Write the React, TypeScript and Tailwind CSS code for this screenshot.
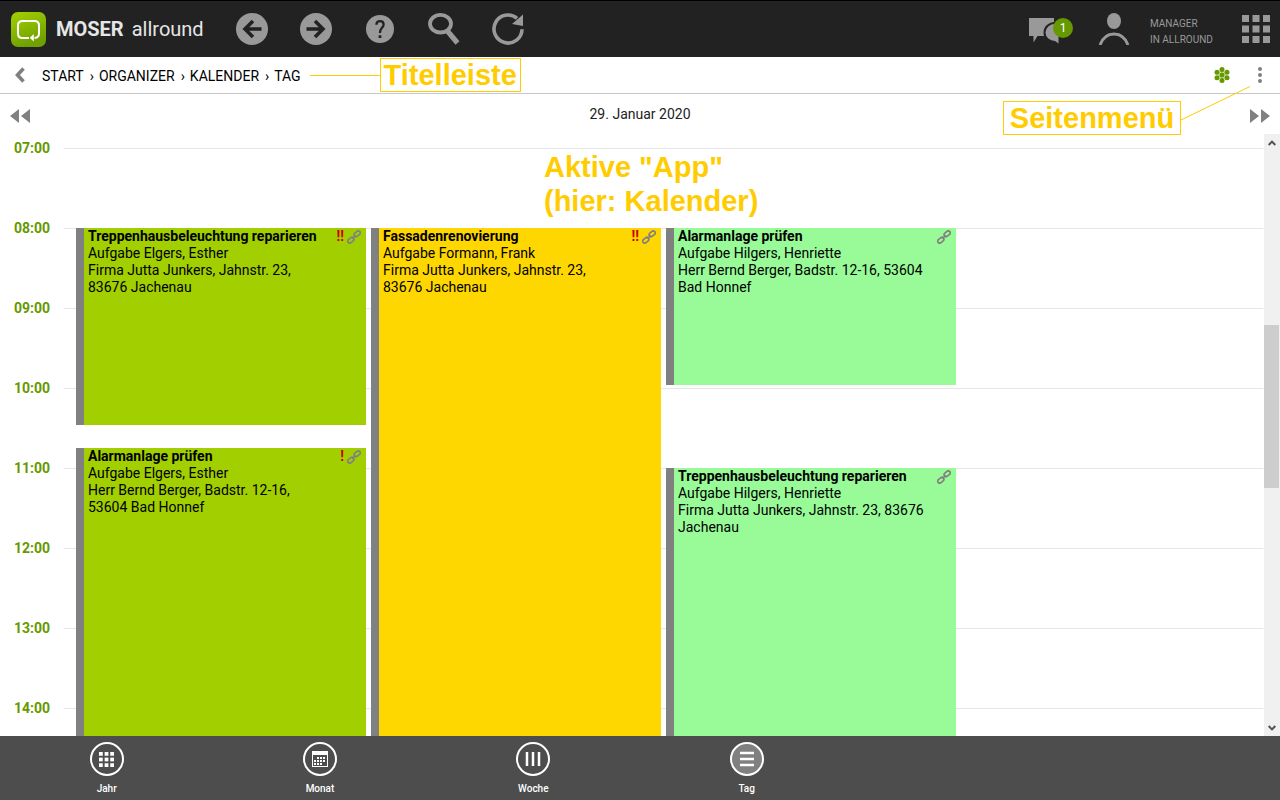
import type { ReactNode } from "react";
import clsx from "clsx";

type Appointment = {
  title: string;
  task: string;
  address: string;
  priority?: string;
  column: number;
  /** quarter hours counted from 07:00 */
  from: number;
  to: number;
  color: string;
};

const hours = ["07:00", "08:00", "09:00", "10:00", "11:00", "12:00", "13:00", "14:00"];

const appointments: Appointment[] = [
  {
    title: "Treppenhausbeleuchtung reparieren",
    task: "Aufgabe Elgers, Esther",
    address: "Firma Jutta Junkers, Jahnstr. 23, 83676 Jachenau",
    priority: "!!",
    column: 1,
    from: 4,
    to: 14,
    color: "bg-[#a2cf00]",
  },
  {
    title: "Alarmanlage prüfen",
    task: "Aufgabe Elgers, Esther",
    address: "Herr Bernd Berger, Badstr. 12-16, 53604 Bad Honnef",
    priority: "!",
    column: 1,
    from: 15,
    to: 34,
    color: "bg-[#a2cf00]",
  },
  {
    title: "Fassadenrenovierung",
    task: "Aufgabe Formann, Frank",
    address: "Firma Jutta Junkers, Jahnstr. 23, 83676 Jachenau",
    priority: "!!",
    column: 2,
    from: 4,
    to: 34,
    color: "bg-[#ffd700]",
  },
  {
    title: "Alarmanlage prüfen",
    task: "Aufgabe Hilgers, Henriette",
    address: "Herr Bernd Berger, Badstr. 12-16, 53604 Bad Honnef",
    column: 3,
    from: 4,
    to: 12,
    color: "bg-[#98fb98]",
  },
  {
    title: "Treppenhausbeleuchtung reparieren",
    task: "Aufgabe Hilgers, Henriette",
    address: "Firma Jutta Junkers, Jahnstr. 23, 83676 Jachenau",
    column: 3,
    from: 16,
    to: 34,
    color: "bg-[#98fb98]",
  },
];

function Logo() {
  return (
    <svg width="35" height="35" viewBox="0 0 35 35" aria-hidden="true">
      <defs>
        <linearGradient id="logo" x1="0" y1="0" x2="0.4" y2="1">
          <stop offset="0" stopColor="#a2d200" />
          <stop offset="1" stopColor="#6f9f00" />
        </linearGradient>
      </defs>
      <rect width="35" height="35" rx="7" fill="url(#logo)" />
      <path
        d="M18 26H11.500Q7 26 7 21.500V13.500Q7 9 11.500 9H23.500Q28 9 28 13.500V21.500Q28 25.500 23.500 26"
        fill="none"
        stroke="#fff"
        strokeWidth="2"
      />
      <path d="M22.800 22V29.500L18.800 25.800Z" fill="#fff" />
    </svg>
  );
}

function ArrowCircle({ flip }: { flip?: boolean }) {
  return (
    <svg width="32" height="32" viewBox="0 0 32 32" className={clsx(flip && "rotate-180")}>
      <circle cx="16" cy="16" r="16" fill="#999" />
      <path d="M17 8L9 16L17 24M9 16H25.500" fill="none" stroke="#222" strokeWidth="3.600" />
    </svg>
  );
}

function HelpIcon() {
  return (
    <svg width="28" height="28" viewBox="0 0 28 28">
      <circle cx="14" cy="14" r="14" fill="#999" />
      <path
        d="M10.400 9.800Q10.400 6.200 14 6.200Q17.600 6.200 17.600 9.500Q17.600 11.500 15.600 13.200Q14 14.800 14 18"
        fill="none"
        stroke="#222"
        strokeWidth="2.300"
      />
      <rect x="12.600" y="20.300" width="2.800" height="2.600" rx="0.500" fill="#222" />
    </svg>
  );
}

function SearchIcon() {
  return (
    <svg width="32" height="32" viewBox="0 0 32 32" fill="none" stroke="#999">
      <ellipse cx="12.500" cy="10.700" rx="10.500" ry="8.800" strokeWidth="3.800" />
      <path d="M19 17.500L29.500 30" strokeWidth="5.200" />
    </svg>
  );
}

function ReloadIcon() {
  return (
    <svg width="32" height="32" viewBox="0 0 32 32">
      <path d="M25 5.300A14 14 0 1 0 30 16.200" fill="none" stroke="#999" strokeWidth="3.600" />
      <path d="M31 1.500V13L20 11Z" fill="#999" />
    </svg>
  );
}

function ChatIcon() {
  return (
    <svg width="32" height="26" viewBox="0 0 32 26">
      <path d="M0 0H25V18H8.500L4.500 24.500V18H0Z" fill="#999" />
      <ellipse cx="26" cy="14.500" rx="11.500" ry="10.500" fill="#222" />
      <path d="M26 6A9.500 8.500 0 0 0 26 23L29.500 25.500V6Z" fill="#999" />
    </svg>
  );
}

function PersonIcon() {
  return (
    <svg width="32" height="32" viewBox="0 0 32 32">
      <ellipse cx="16" cy="8" rx="7" ry="8" fill="#999" />
      <path d="M2 32Q6 21 16 21Q26 21 30 32" fill="none" stroke="#999" strokeWidth="3" />
    </svg>
  );
}

function SquaresIcon({ size, fill }: { size: number; fill: string }) {
  return (
    <svg width={size} height={size} viewBox="0 0 28 28" fill={fill}>
      {[0, 10.5, 21].map((y) => [0, 10.5, 21].map((x) => <rect key={`${x}-${y}`} x={x} y={y} width="7" height="7" />))}
    </svg>
  );
}

function FlowerIcon() {
  const dots = [[8, 2.5], [3, 5.200], [13, 5.200], [8, 8], [3, 10.800], [13, 10.800], [8, 13.5]];
  return (
    <svg width="16" height="16" viewBox="0 0 16 16" fill="#690">
      {dots.map(([x, y]) => (
        <circle key={`${x}-${y}`} cx={x} cy={y} r="2.500" />
      ))}
      <circle cx="8" cy="8" r="4.500" fillOpacity="0.25" />
    </svg>
  );
}

function SkipIcon({ flip }: { flip?: boolean }) {
  return (
    <svg width="20" height="14" viewBox="0 0 20 14" fill="#808080" className={clsx(flip && "rotate-180")}>
      <path d="M9 0V14L0 7ZM20 0V14L11 7Z" />
    </svg>
  );
}

function LinkIcon() {
  return (
    <svg width="14" height="14" viewBox="0 0 14 14" fill="none" stroke="#808080" strokeWidth="1.600">
      <rect x="-3.400" y="-2" width="6.800" height="4" rx="2" transform="translate(10.200 3.800) rotate(-40)" />
      <rect x="-3.400" y="-2" width="6.800" height="4" rx="2" transform="translate(3.800 10.200) rotate(-40)" />
      <path d="M5.200 8.800L8.800 5.200" />
    </svg>
  );
}

function MonthIcon() {
  return (
    <svg width="16" height="16" viewBox="0 0 16 16">
      <rect x="0.500" y="0.500" width="15" height="15" fill="none" stroke="#fff" />
      <rect width="16" height="4" fill="#fff" />
      <path d="M5 7H14M2 10H14M2 13H11" stroke="#fff" strokeWidth="2" strokeDasharray="2 1" />
    </svg>
  );
}

function BarsIcon({ flip }: { flip?: boolean }) {
  return (
    <svg width="16" height="16" viewBox="0 0 16 16" className={clsx(flip && "rotate-90")}>
      <path d="M2 1V15M8 1V15M14 1V15" stroke="#fff" strokeWidth="2.500" />
    </svg>
  );
}

function ScrollArrow({ down }: { down?: boolean }) {
  return (
    <svg width="8" height="6" viewBox="0 0 8 6" className={clsx(down && "rotate-180")}>
      <path d="M0.700 5L4 1.600L7.300 5" fill="none" stroke="#505050" strokeWidth="2" />
    </svg>
  );
}

function HeaderButton({ label, children }: { label: string; children: ReactNode }) {
  return (
    <button type="button" aria-label={label} className="flex h-14 w-16 items-center justify-center">
      {children}
    </button>
  );
}

function Header() {
  return (
    <header className="flex h-[57px] shrink-0 items-center border-t border-black bg-[#222]">
      <a href="#start" className="flex w-[220px] items-center pl-[11px] text-xl text-[#e6e6e6]">
        <Logo />
        <span className="ml-2.5 font-bold">MOSER</span>
        <span className="ml-2">allround</span>
      </a>
      <HeaderButton label="Zurück"><ArrowCircle /></HeaderButton>
      <HeaderButton label="Vorwärts"><ArrowCircle flip /></HeaderButton>
      <HeaderButton label="Hilfe"><HelpIcon /></HeaderButton>
      <HeaderButton label="Suche"><SearchIcon /></HeaderButton>
      <HeaderButton label="Aktualisieren"><ReloadIcon /></HeaderButton>

      <div className="ml-auto flex items-center pr-2.5">
        <button type="button" aria-label="Nachrichten" className="relative w-11 pt-1">
          <ChatIcon />
          <span className="absolute top-1 right-0 flex size-5 items-center justify-center rounded-full bg-[#690] text-xs text-white">
            1
          </span>
        </button>
        <button type="button" className="ml-[25px] flex items-center gap-5 text-left text-[10px] leading-4 text-[#999]">
          <PersonIcon />
          <span className="w-[72px] pt-1.5">
            MANAGER
            <br />
            IN ALLROUND
          </span>
        </button>
        <button type="button" aria-label="Apps" className="ml-5">
          <SquaresIcon size={28} fill="#999" />
        </button>
      </div>
    </header>
  );
}

function TitleBar() {
  const path = ["START", "ORGANIZER", "KALENDER", "TAG"];
  return (
    <div className="flex h-[37px] shrink-0 items-center border-b border-[#c8c8c8] pr-[18px] pl-[15px]">
      <button type="button" aria-label="Zurück">
        <svg width="10" height="16" viewBox="0 0 10 16">
          <path d="M8.500 1.500L2.500 8L8.500 14.500" fill="none" stroke="#808080" strokeWidth="3.600" />
        </svg>
      </button>
      <nav className="ml-[17px] flex gap-1.5 pt-0.5" aria-label="Pfad">
        {path.map((p, i) => (
          <span key={p} className="flex gap-[5px]">
            {i > 0 && <span>›</span>}
            <a href={`#${p.toLowerCase()}`}>{p}</a>
          </span>
        ))}
      </nav>
      <span className="ml-[9px] h-px w-[70px] bg-[#fc0]" />
      <Callout className="w-[141px]">Titelleiste</Callout>
      <button type="button" aria-label="Status" className="ml-auto">
        <FlowerIcon />
      </button>
      <button type="button" aria-label="Seitenmenü" className="ml-7">
        <svg width="4" height="16" viewBox="0 0 4 16" fill="#808080">
          <circle cx="2" cy="2" r="2" />
          <circle cx="2" cy="8" r="2" />
          <circle cx="2" cy="14" r="2" />
        </svg>
      </button>
    </div>
  );
}

function Callout({ className, children }: { className?: string; children: ReactNode }) {
  return (
    <span
      className={clsx(
        "flex h-[34px] items-center justify-center border border-[#fc0] bg-white font-['Liberation_Sans',sans-serif] text-[29px] leading-8 font-bold text-[#fc0]",
        className,
      )}
    >
      {children}
    </span>
  );
}

function DateBar() {
  return (
    <div className="relative flex h-10 shrink-0 items-center justify-between px-2.5">
      <button type="button" aria-label="Vorheriger Tag" className="pt-1"><SkipIcon /></button>
      <h1 className="text-[#222]">29. Januar 2020</h1>
      <button type="button" aria-label="Nächster Tag" className="pt-1"><SkipIcon flip /></button>

      <div className="absolute -top-2 right-[30px] z-10 flex items-end">
        <Callout className="w-[178px]">Seitenmenü</Callout>
        <svg width="69" height="49" viewBox="0 0 69 49" className="pointer-events-none">
          <path d="M0 34L69 0.500" stroke="#fc0" />
        </svg>
      </div>
    </div>
  );
}

function AppointmentCard({ item }: { item: Appointment }) {
  return (
    <div
      className="flex pr-[5px] pb-[3px] leading-[17px] text-black"
      style={{ gridColumn: item.column, gridRow: `${item.from + 1} / ${item.to + 1}` }}
    >
      <article className={clsx("flex flex-1 gap-2.5 border-l-8 border-[#808080] pr-[5px] pl-1", item.color)}>
        <div className="min-w-0 flex-1">
          <h2 className="font-bold whitespace-nowrap">{item.title}</h2>
          <p>{item.task}</p>
          <p>{item.address}</p>
        </div>
        <div className="flex h-[17px] items-start gap-[3px]">
          {item.priority && <span className="font-bold text-[#d00000]">{item.priority}</span>}
          <span className="pt-0.5"><LinkIcon /></span>
        </div>
      </article>
    </div>
  );
}

function Calendar() {
  return (
    <main className="flex min-h-0 flex-1">
      <div className="relative flex-1 overflow-hidden pt-1 pr-px">
        {hours.map((h) => (
          <div key={h} className="h-20">
            <div className="flex h-[21px] items-center pl-3.5">
              <span className="w-[50px] pb-0.5 font-bold text-[#690]">{h}</span>
              <span className="h-px flex-1 bg-[#e6e6e6]" />
            </div>
          </div>
        ))}

        <div className="absolute top-3.5 right-2 left-[76px] grid auto-rows-[20px] grid-cols-4">
          {appointments.map((a) => (
            <AppointmentCard key={`${a.column}-${a.from}`} item={a} />
          ))}
        </div>

        <p className="absolute top-4 left-[544px] font-['Liberation_Sans',sans-serif] text-[29px] leading-[34px] font-bold text-[#fc0]">
          Aktive "App"
          <br />
          (hier: Kalender)
        </p>
      </div>

      <div className="flex w-4 shrink-0 flex-col bg-[#f0f0f0]">
        <button type="button" aria-label="Nach oben" className="flex h-[17px] items-center justify-center">
          <ScrollArrow />
        </button>
        <span className="flex-[174]" />
        <span className="mr-px flex-[163] bg-[#cdcdcd]" />
        <span className="flex-[231]" />
        <button type="button" aria-label="Nach unten" className="flex h-[17px] items-center justify-center">
          <ScrollArrow down />
        </button>
      </div>
    </main>
  );
}

const views = [
  { label: "Jahr", icon: <SquaresIcon size={15} fill="#fff" /> },
  { label: "Monat", icon: <MonthIcon /> },
  { label: "Woche", icon: <BarsIcon /> },
  { label: "Tag", icon: <BarsIcon flip />, active: true },
];

function ViewBar() {
  return (
    <footer className="grid h-16 shrink-0 grid-cols-6 bg-[#4d4d4d]">
      {views.map((v) => (
        <button
          key={v.label}
          type="button"
          aria-pressed={!!v.active}
          className="flex flex-col items-center gap-[5px] pt-1.5 text-[10px] leading-4 font-medium text-white"
        >
          <span
            className={clsx(
              "flex size-[34px] shrink-0 items-center justify-center rounded-full border-2 border-white",
              v.active && "bg-[#808080]",
            )}
          >
            {v.icon}
          </span>
          {v.label}
        </button>
      ))}
    </footer>
  );
}

export default function App() {
  return (
    <div className="flex h-screen flex-col overflow-hidden bg-white font-[Roboto,sans-serif] text-sm text-black">
      <Header />
      <TitleBar />
      <DateBar />
      <Calendar />
      <ViewBar />
    </div>
  );
}
